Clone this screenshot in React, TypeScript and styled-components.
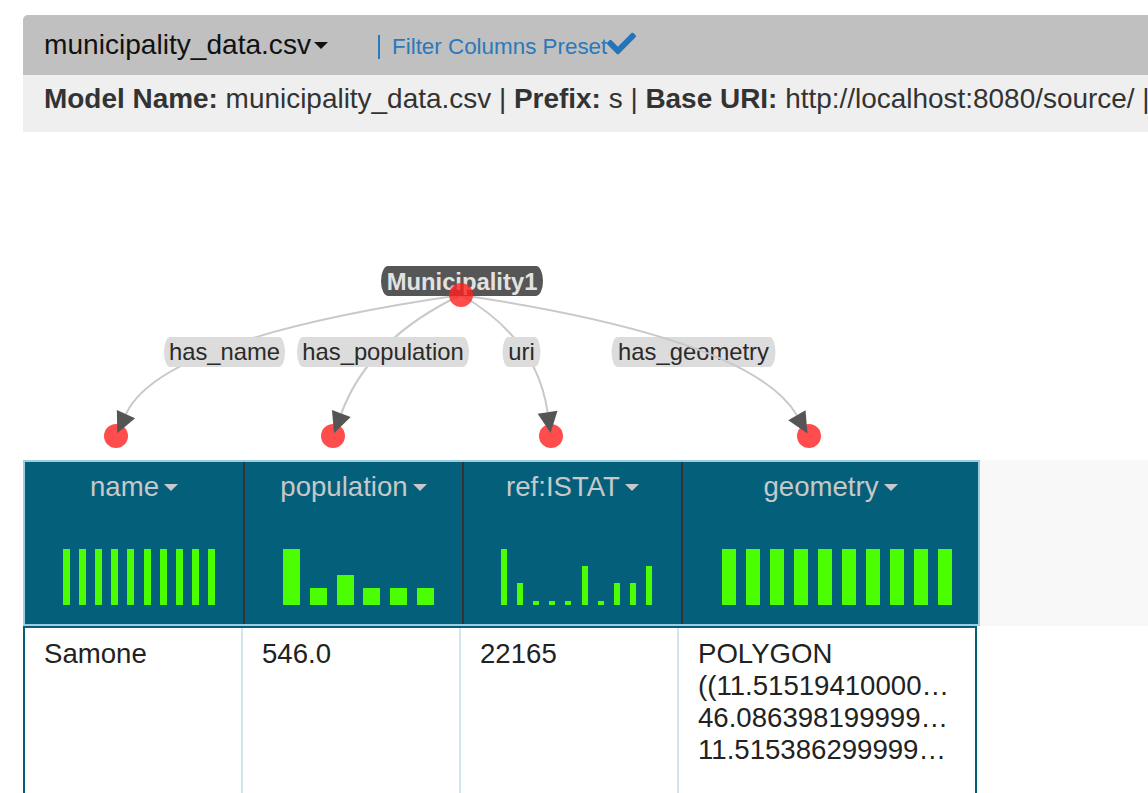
import React from 'react';
import styled, { createGlobalStyle } from 'styled-components';
import { FaCheck } from 'react-icons/fa';

const GlobalStyle = createGlobalStyle`
  html, body { margin: 0; padding: 0; background: #ffffff; overflow: hidden; }
  body { font-family: "Liberation Sans", Arial, sans-serif; }
  * { box-sizing: border-box; }
`;

const Page = styled.div`
  width: 1400px;
  padding: 15px 0 0 23px;
`;

const TopBar = styled.div`
  display: flex;
  align-items: center;
  height: 60px;
  padding-left: 21px;
  background: #c0c0c0;
  border-top-left-radius: 5px;
`;

const FileTitle = styled.div`
  display: flex;
  align-items: center;
  font-size: 28.1px;
  line-height: 32px;
  color: #111;
`;

const Caret = styled.span<{ $color: string; $half: number; $h: number; $gap: number }>`
  display: inline-block;
  width: 0;
  height: 0;
  margin-left: ${(p) => p.$gap}px;
  border-top: ${(p) => p.$h}px solid ${(p) => p.$color};
  border-left: ${(p) => p.$half}px solid transparent;
  border-right: ${(p) => p.$half}px solid transparent;
`;

const FilterLink = styled.a`
  display: flex;
  align-items: center;
  margin-left: 50px;
  margin-top: 3px;
  padding-left: 12px;
  height: 24px;
  border-left: 2px solid #2c78b8;
  font-size: 22.4px;
  line-height: 24px;
  color: #2c78b8;
  text-decoration: none;
  cursor: pointer;
  svg { margin-top: -7px; }
`;

const InfoBand = styled.div`
  height: 57px;
  padding: 8px 0 0 21px;
  background: #efefef;
  font-size: 27.95px;
  line-height: 32px;
  color: #333;
  white-space: nowrap;
  overflow: hidden;
  b { font-weight: 700; }
`;

const GraphCanvas = styled.svg`
  display: block;
  width: 1377px;
  height: 328px;
`;

const HeaderStrip = styled.div`
  display: flex;
  background: #f8f8f8;
`;

const HeaderTable = styled.div`
  display: flex;
  border: 2px solid #9bcee0;
  background: #04607a;
`;

const HeaderCell = styled.div<{ $w: number; $last?: boolean }>`
  width: ${(p) => p.$w}px;
  display: flex;
  flex-direction: column;
  align-items: stretch;
  padding: 9px 0 19px;
  border-right: ${(p) => (p.$last ? 'none' : '2px solid #333')};
`;

const HeaderTitle = styled.div`
  display: flex;
  justify-content: center;
  align-items: center;
  font-size: 27.6px;
  line-height: 32px;
  color: #c8c8c8;
`;

const Histogram = styled.div<{ $pl: number; $pr: number }>`
  display: flex;
  align-items: flex-end;
  justify-content: space-between;
  height: 56px;
  margin-top: 46px;
  padding: 0 ${(p) => p.$pr}px 0 ${(p) => p.$pl}px;
`;

const Bar = styled.div<{ $w: number; $h: number }>`
  width: ${(p) => p.$w}px;
  height: ${(p) => p.$h}px;
  background: #4cff00;
`;

const BodyTable = styled.div`
  display: flex;
  width: 954px;
  border-top: 2px solid #04607a;
  border-left: 2px solid #04607a;
  border-right: 2px solid #04607a;
`;

const BodyCell = styled.div<{ $w: number; $last?: boolean }>`
  width: ${(p) => p.$w}px;
  min-height: 170px;
  padding: 10px 19px 0 19px;
  border-right: ${(p) => (p.$last ? 'none' : '2px solid #cfe7ef')};
  font-size: 27.6px;
  line-height: 32px;
  color: #222;
`;

const TruncLine = styled.div`
  white-space: nowrap;
  overflow: hidden;
  text-overflow: ellipsis;
`;

type Target = { x: number; y: number; label: string; lx: number; lw: number };

const SRC = { x: 461, y: 295 };
const LABEL_Y = 352;
const TARGETS: Target[] = [
  { x: 116, y: 436, label: 'has_name', lx: 224.5, lw: 121 },
  { x: 333, y: 436, label: 'has_population', lx: 383, lw: 172 },
  { x: 551, y: 436, label: 'uri', lx: 521.5, lw: 38 },
  { x: 809, y: 436, label: 'has_geometry', lx: 693.5, lw: 164 },
];

function edgeGeom(t: Target) {
  const cx = 2 * t.lx - 0.5 * (SRC.x + t.x);
  const cy = 2 * LABEL_Y - 0.5 * (SRC.y + t.y);
  const dx = t.x - cx;
  const dy = t.y - cy;
  const len = Math.hypot(dx, dy);
  const ux = dx / len;
  const uy = dy / len;
  const tipX = t.x - ux * 3;
  const tipY = t.y - uy * 3;
  const L = 21;
  const W = 10;
  const bx = tipX - ux * L;
  const by = tipY - uy * L;
  const arrow = `${tipX},${tipY} ${bx + uy * W},${by - ux * W} ${bx - uy * W},${by + ux * W}`;
  const path = `M ${SRC.x} ${SRC.y} Q ${cx} ${cy} ${bx} ${by}`;
  return { path, arrow };
}

const EdgeLabel: React.FC<{ t: Target }> = ({ t }) => (
  <g>
    <rect x={t.lx - t.lw / 2} y={337} width={t.lw} height={30} rx={6} ry={15} fill="#dcdcdc" />
    <text x={t.lx} y={360} textAnchor="middle" fontSize="23.8" fill="#2a2a2a" fontFamily="'Liberation Sans', Arial, sans-serif">
      {t.label}
    </text>
  </g>
);

const Graph: React.FC = () => {
  const geoms = TARGETS.map(edgeGeom);
  return (
    <GraphCanvas viewBox="23 132 1377 328">
      <EdgeLabel t={TARGETS[3]} />
      {geoms.map((g, i) => (
        <path key={'e' + i} d={g.path} fill="none" stroke="#c9c9c9" strokeWidth={2} />
      ))}
      {TARGETS.slice(0, 3).map((t) => (
        <EdgeLabel key={t.label} t={t} />
      ))}
      <rect x={381} y={266} width={162} height={30} rx={7} ry={15} fill="#565656" />
      <text x={462} y={290} textAnchor="middle" fontSize="23.8" fontWeight="700" fill="#e2e2e2" fontFamily="'Liberation Sans', Arial, sans-serif">
        Municipality1
      </text>
      <circle cx={SRC.x} cy={SRC.y} r={12} fill="#ff2020" fillOpacity={0.8} />
      {TARGETS.map((t) => (
        <circle key={'c' + t.label} cx={t.x} cy={t.y} r={12} fill="#ff2020" fillOpacity={0.8} />
      ))}
      {geoms.map((g, i) => (
        <polygon key={'a' + i} points={g.arrow} fill="#555555" />
      ))}
    </GraphCanvas>
  );
};

type Col = { name: string; w: number; bw: number; bars: number[]; pl: number; pr: number };

const COLUMNS: Col[] = [
  { name: 'name', w: 220, bw: 7, bars: Array(10).fill(56), pl: 38, pr: 28 },
  { name: 'population', w: 219, bw: 17, bars: [56, 17, 30, 17, 17, 17], pl: 38, pr: 28 },
  { name: 'ref:ISTAT', w: 219, bw: 6, bars: [56, 22, 4, 4, 4, 39, 4, 22, 22, 39], pl: 37, pr: 29 },
  { name: 'geometry', w: 295, bw: 14, bars: Array(10).fill(56), pl: 39, pr: 26 },
];

const BODY_WIDTHS = [218, 218, 218, 296];

export default function App() {
  return (
    <>
      <GlobalStyle />
      <Page>
        <TopBar>
          <FileTitle>
            municipality_data.csv
            <Caret $color="#111" $half={7.5} $h={7} $gap={3} />
          </FileTitle>
          <FilterLink>
            Filter Columns Preset
            <FaCheck size={29} color="#2474b8" />
          </FilterLink>
        </TopBar>
        <InfoBand>
          <b>Model Name:</b> municipality_data.csv | <b>Prefix:</b> s | <b>Base URI:</b> http://localhost:8080/source/ |
        </InfoBand>
        <Graph />
        <HeaderStrip>
          <HeaderTable>
            {COLUMNS.map((c, i) => (
              <HeaderCell key={c.name} $w={c.w} $last={i === COLUMNS.length - 1}>
                <HeaderTitle>
                  {c.name}
                  <Caret $color="#c8c8c8" $half={7.5} $h={7} $gap={5} />
                </HeaderTitle>
                <Histogram $pl={c.pl} $pr={c.pr}>
                  {c.bars.map((h, j) => (
                    <Bar key={j} $w={c.bw} $h={h} />
                  ))}
                </Histogram>
              </HeaderCell>
            ))}
          </HeaderTable>
        </HeaderStrip>
        <BodyTable>
          <BodyCell $w={BODY_WIDTHS[0]}>Samone</BodyCell>
          <BodyCell $w={BODY_WIDTHS[1]}>546.0</BodyCell>
          <BodyCell $w={BODY_WIDTHS[2]}>22165</BodyCell>
          <BodyCell $w={BODY_WIDTHS[3]} $last>
            <TruncLine>POLYGON</TruncLine>
            <TruncLine>((11.5151941000000002</TruncLine>
            <TruncLine>46.0863981999999965,</TruncLine>
            <TruncLine>11.5153862999999987</TruncLine>
          </BodyCell>
        </BodyTable>
      </Page>
    </>
  );
}
